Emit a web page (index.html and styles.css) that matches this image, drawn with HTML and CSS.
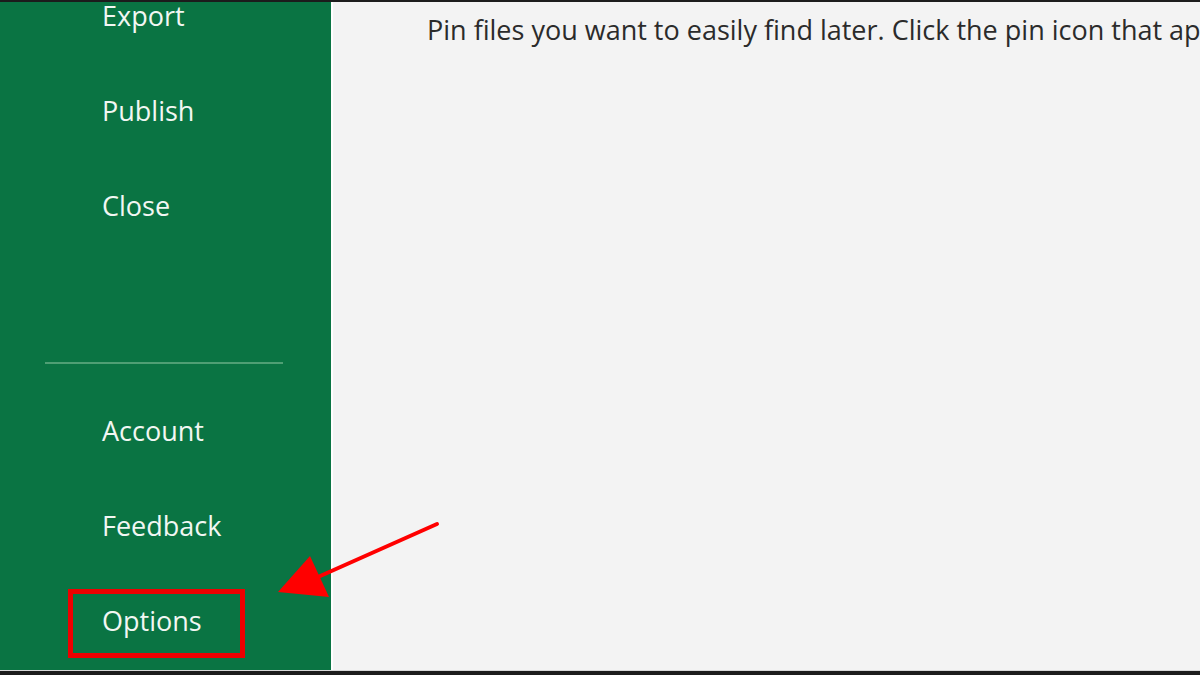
FILE: index.html
```html
<!DOCTYPE html>
<html lang="en">
  <head>
    <meta charset="UTF-8" />
    <meta name="viewport" content="width=device-width, initial-scale=1.0" />
    <title>Excel - File</title>
    <link rel="stylesheet" href="styles.css">
  </head>
  <body>
    <div class="backstage">
      <nav class="sidebar">
        <ul class="menu menu-top">
          <li class="menu-item">Export</li>
          <li class="menu-item">Publish</li>
          <li class="menu-item">Close</li>
        </ul>
        <hr class="separator" />
        <ul class="menu menu-bottom">
          <li class="menu-item">Account</li>
          <li class="menu-item">Feedback</li>
          <li class="menu-item"><span class="highlight">Options</span></li>
        </ul>
      </nav>
      <main class="content">
        <p class="hint">Pin files you want to easily find later. Click the pin icon that appears when you hover over a file.</p>
      </main>
      <!-- annotation arrow pointing at Options -->
      <svg class="arrow" width="200" height="120" viewBox="0 0 200 120">
        <line x1="179" y1="42" x2="60" y2="95" stroke="#f00" stroke-width="4" stroke-linecap="round" />
        <polygon points="20,110 52,74 71,115" fill="#f00" />
      </svg>
    </div>
  </body>
</html>
```

FILE: styles.css
```css
:root {
  --green: #0a7443;
  --sep-color: #4f9f74;
  --menu-text: #f2f7f3;
  --content-bg: #f3f3f3;
  --red: #ee0000;
}

body {
  margin: 0;
  padding: 0;
  background-color: #1c1c1c;
  font-family: "Open Sans", "Noto Sans", Arial, sans-serif;
  height: 675px;
  overflow: hidden;
}

.backstage {
  position: relative;
  display: flex;
  height: 668px;
  margin-top: 2px;
  border-bottom: 1px solid #d8d8d8;
  overflow: hidden;
}

.sidebar {
  width: 331px;
  flex-shrink: 0;
  background-color: var(--green);
  display: flex;
  flex-direction: column;
}

.menu {
  list-style: none;
  margin: 0;
  padding: 0;
  display: flex;
  flex-direction: column;
  gap: 59px;
}

.menu-top {
  margin-top: -4px;
}

.menu-item {
  line-height: 36px;
  padding-left: 102px;
  color: var(--menu-text);
  font-size: 27px;
}

.separator {
  border: none;
  height: 2px;
  background-color: var(--sep-color);
  margin: 138px 48px 49px 45px;
}

/* red annotation box drawn around the Options entry */
.highlight {
  position: relative;
}

.highlight::after {
  content: "";
  position: absolute;
  left: -34px;
  top: -13px;
  width: 167px;
  height: 59px;
  border: 5px solid var(--red);
}

.content {
  flex: 1;
  background-color: var(--content-bg);
  border-left: 2px solid #ffffff;
  overflow: hidden;
}

.hint {
  margin: 9px 0 0 94px;
  white-space: nowrap;
  color: #2b2b2b;
  font-size: 27px;
}

.arrow {
  position: absolute;
  left: 258px;
  top: 480px;
}
```
